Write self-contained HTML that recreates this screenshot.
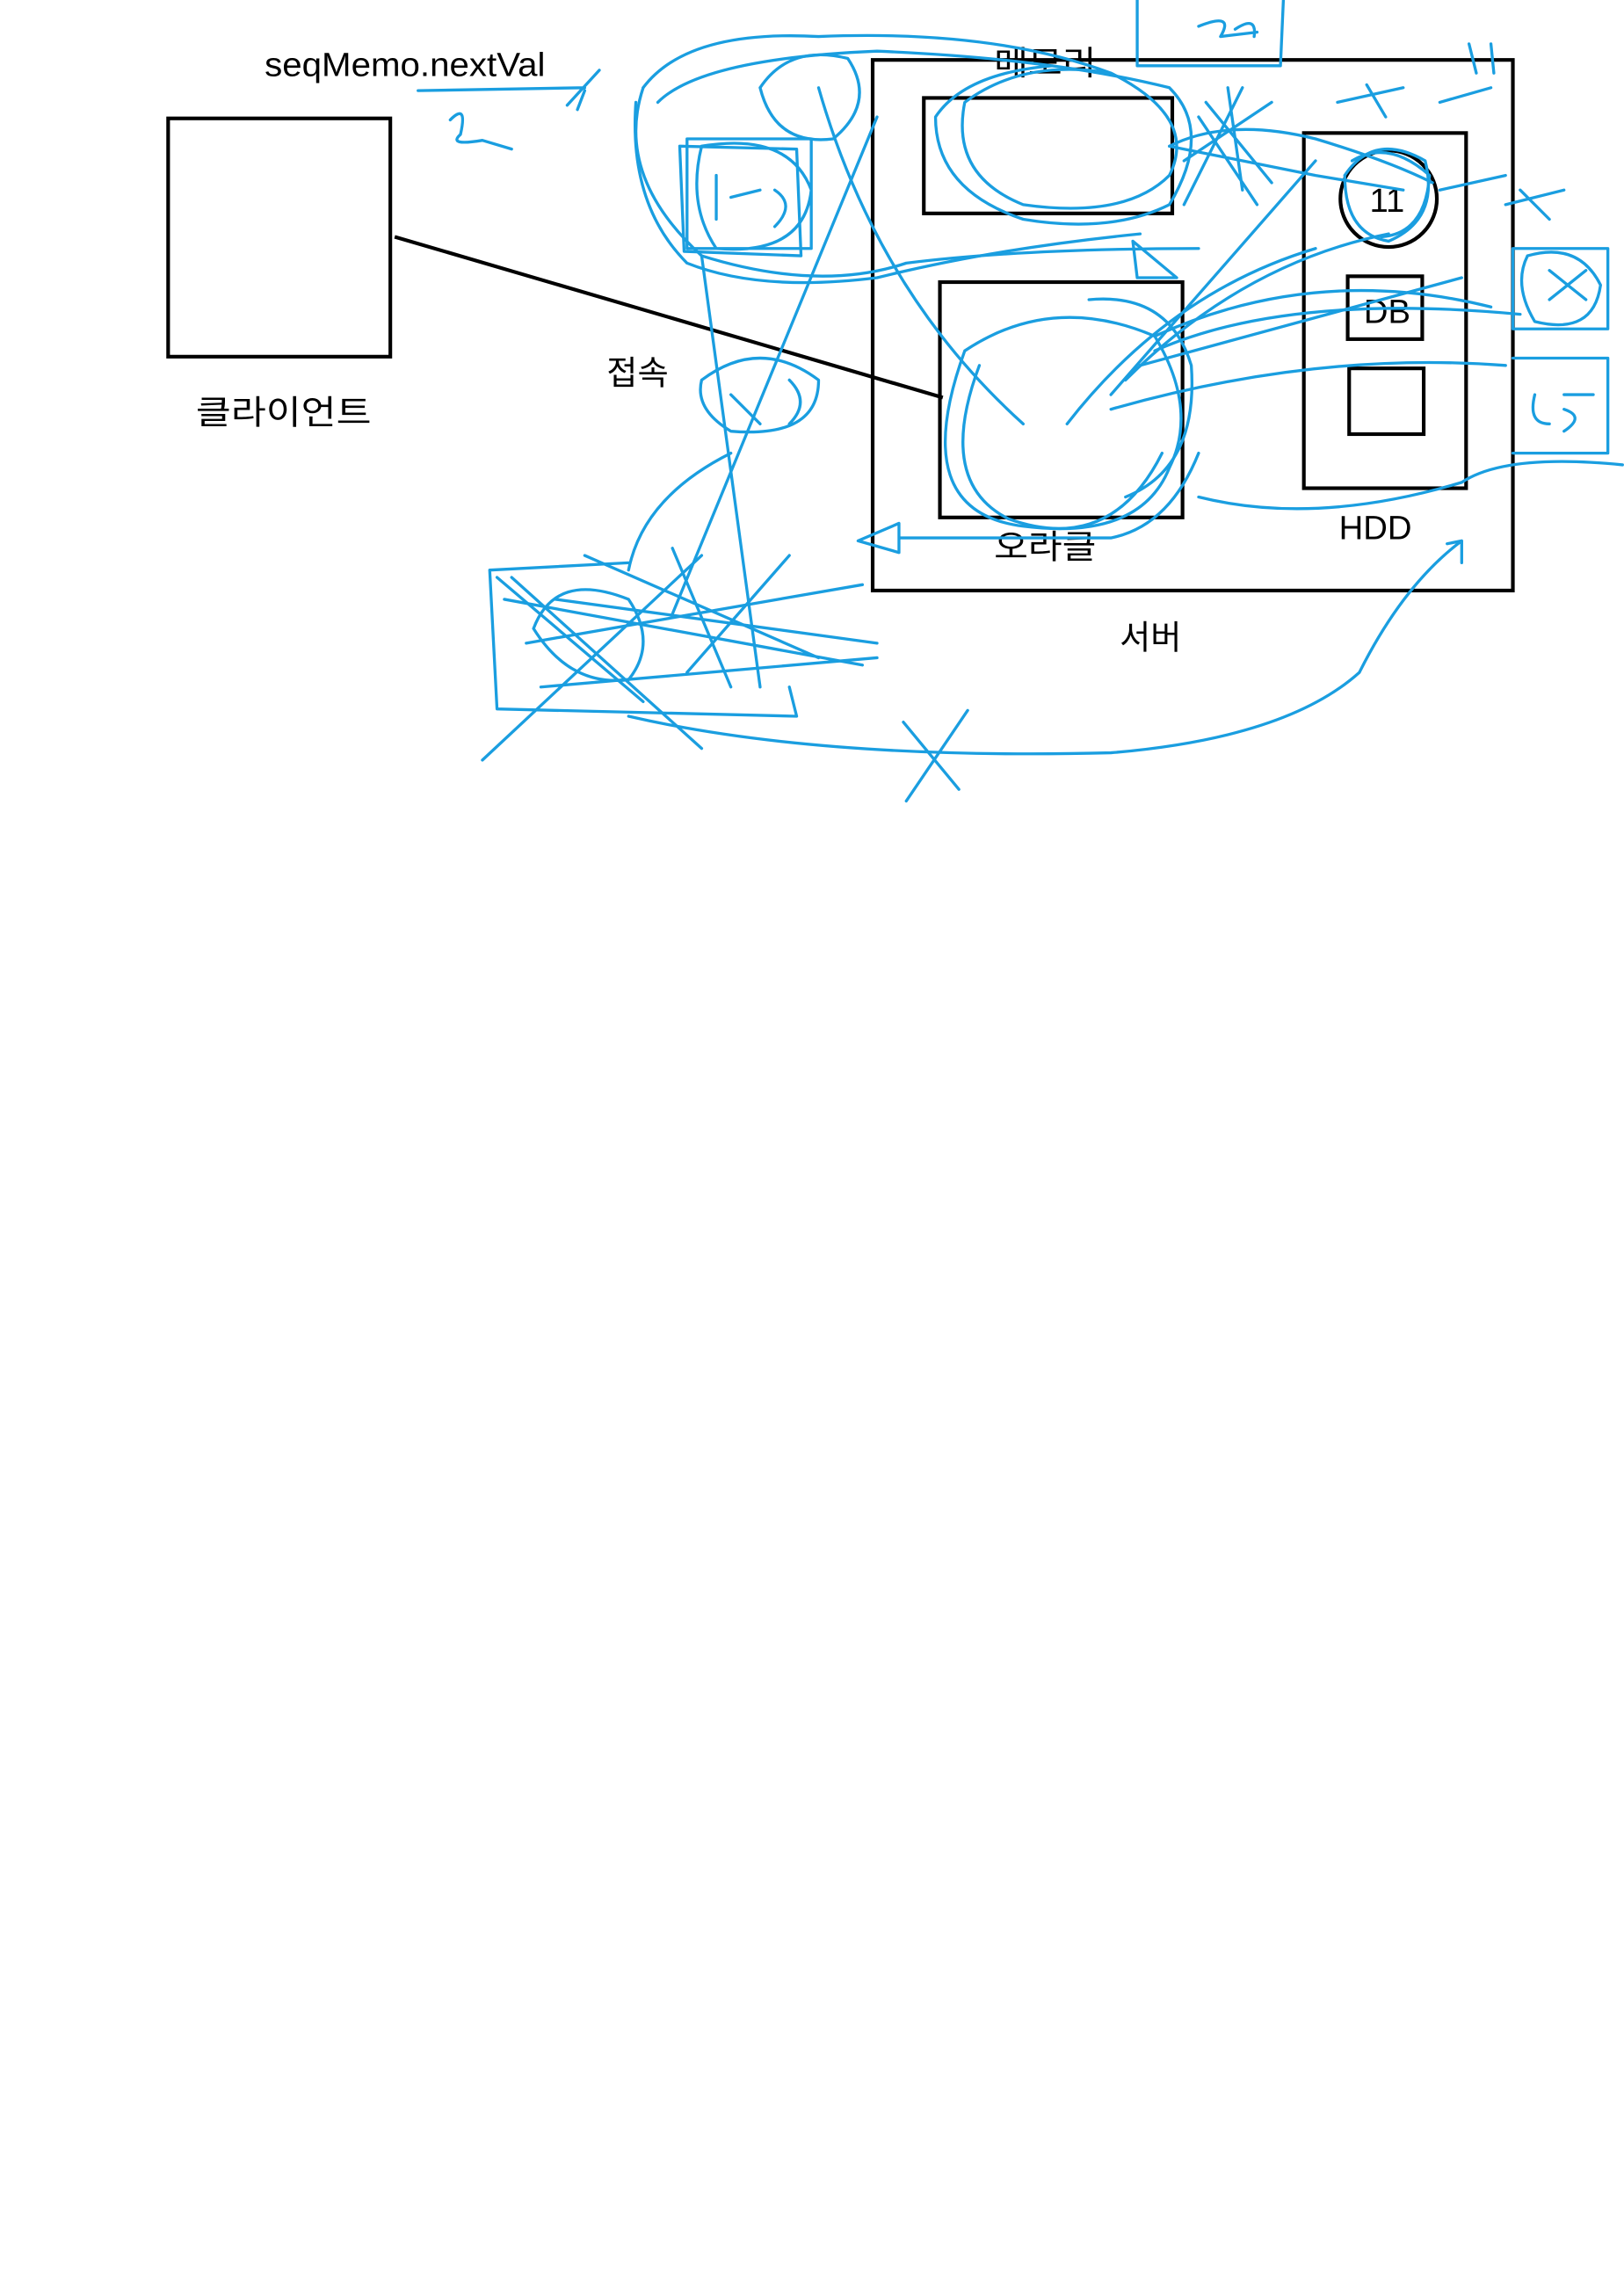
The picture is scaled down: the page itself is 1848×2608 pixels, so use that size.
<!DOCTYPE html>
<html><head><meta charset="utf-8"><style>
html,body{margin:0;padding:0;background:#fff;}
svg{display:block;}
text{font-family:"Liberation Sans","Noto Sans CJK KR",sans-serif;fill:#000;}
</style></head><body>
<svg width="1848" height="2608" viewBox="0 0 1111 1568" xmlns="http://www.w3.org/2000/svg">
<rect width="1111" height="1568" fill="#fff"/>
<g fill="none" stroke="#000" stroke-width="2.5">
<rect x="115" y="81" width="152" height="163"/>
<line x1="270" y1="162" x2="645" y2="272"/>
<rect x="597" y="41" width="438" height="363"/>
<rect x="632" y="67" width="170" height="79"/>
<rect x="643" y="193" width="166" height="161"/>
<rect x="892" y="91" width="111" height="243"/>
<circle cx="950" cy="136" r="33"/>
<rect x="922" y="189" width="51" height="43"/>
<rect x="923" y="252" width="51" height="45"/>
</g>
<g font-size="23">
<text x="181" y="52" textLength="192" lengthAdjust="spacingAndGlyphs">seqMemo.nextVal</text>
<text x="134" y="290" textLength="120" lengthAdjust="spacingAndGlyphs">클라이언트</text>
<text x="415" y="263">접속</text>
<text x="680" y="51" textLength="70" lengthAdjust="spacingAndGlyphs">메모리</text>
<text x="680" y="382" textLength="70" lengthAdjust="spacingAndGlyphs">오라클</text>
<text x="916" y="369">HDD</text>
<text x="766" y="444">서버</text>
<text x="933" y="221">DB</text>
<text x="937" y="145">11</text>
</g>
<g fill="none" stroke="#1a9ee0" stroke-width="2" stroke-linecap="round" stroke-linejoin="round">
<path d="M286 62 L400 60 M388 72 L410 48 M400 62 L395 75"/>
<path d="M308 82 Q320 70 315 92 Q306 100 330 96 L350 102"/>
<path d="M778 0 L778 45 L876 45 L878 0"/>
<path d="M820 18 Q845 8 835 25 L860 22 M845 20 Q860 10 858 25"/>
<path d="M440 60 Q470 20 560 25 Q680 20 760 50 Q820 80 800 120 Q770 150 700 140 Q650 120 660 70 Q700 40 760 50"/>
<path d="M450 70 Q480 40 600 35 Q720 40 800 60 Q830 90 800 140 Q760 160 700 150 Q640 130 640 80 Q660 50 720 45"/>
<path d="M520 60 Q540 30 580 40 Q600 70 570 95 Q530 100 520 60"/>
<path d="M470 95 L555 95 L555 170 L470 170 Z M480 100 Q540 90 555 130 Q550 175 490 170 Q470 140 480 100"/>
<path d="M465 100 L545 102 L548 175 L468 172 Z"/>
<path d="M490 120 L490 150 M500 135 L520 130 M530 130 Q545 140 530 155"/>
<path d="M440 60 Q420 120 480 175 Q560 200 620 180 Q700 170 820 170"/>
<path d="M435 70 Q430 140 470 180 Q520 200 600 190 Q680 170 780 160"/>
<path d="M480 175 L520 470 M540 470 L545 490 L340 485 L335 390 L430 385"/>
<path d="M480 260 Q520 230 560 260 Q560 300 500 295 Q475 280 480 260 M500 270 L520 290 M540 260 Q555 275 540 290"/>
<path d="M340 395 L440 480 M350 395 L480 512 M330 520 L480 380 M370 470 L600 450 M360 440 L590 400 M380 410 L600 440"/>
<path d="M345 410 L590 455 M400 380 L560 450 M460 375 L500 470 M540 380 L470 460"/>
<path d="M365 430 Q380 390 430 410 Q450 440 430 465 Q390 470 365 430"/>
<path d="M430 390 Q440 340 500 310 M600 80 L460 420"/>
<path d="M560 60 Q600 200 700 290 M660 240 Q620 350 700 360 Q780 370 800 320 Q820 280 790 230 Q720 200 660 240"/>
<path d="M670 250 Q640 330 690 355 Q760 380 795 310 M745 205 Q800 200 815 250 Q820 320 770 340"/>
<path d="M730 290 Q800 200 900 170 M760 270 L900 110 M780 250 L1000 190 M760 280 Q900 240 1030 250 M790 230 Q900 180 1020 210"/>
<path d="M770 260 Q850 180 950 160 M790 240 Q880 200 1040 215"/>
<path d="M800 100 L900 120 L960 130 M820 80 L860 140 M810 110 L870 70 M840 60 L850 130"/>
<path d="M800 100 Q840 80 900 95 Q950 110 980 125 M850 60 L810 140 M825 70 L870 125"/>
<path d="M920 120 Q940 90 975 110 Q985 150 950 165 Q920 160 920 120"/>
<path d="M925 110 Q950 95 978 120 Q975 160 945 162"/>
<path d="M985 130 L1030 120 M1030 140 L1070 130 M1040 130 L1060 150"/>
<path d="M915 70 L960 60 M935 58 L948 80 M985 70 L1020 60 M1005 30 L1010 50 M1020 30 L1022 50"/>
<path d="M1035 170 L1100 170 L1100 225 L1035 225 Z M1045 175 Q1080 165 1095 195 Q1090 230 1050 220 Q1035 195 1045 175 M1060 185 L1085 205 M1085 185 L1060 205"/>
<path d="M1035 245 L1100 245 L1100 310 L1035 310 M1050 270 Q1045 290 1060 290 M1070 270 L1090 270 M1070 280 Q1085 285 1070 295"/>
<path d="M820 340 Q900 360 1000 330 Q1030 310 1110 318"/>
<path d="M587 370 L615 358 L615 378 Z M615 368 L760 368 Q800 360 820 310"/>
<path d="M430 490 Q560 520 760 515 Q880 505 930 460 Q960 400 1000 370 M990 372 L1000 370 L1000 385"/>
<path d="M620 548 L662 486 M618 494 L656 540"/>
<path d="M775 165 L805 190 L778 190 Z"/>
</g>
</svg>
</body></html>
